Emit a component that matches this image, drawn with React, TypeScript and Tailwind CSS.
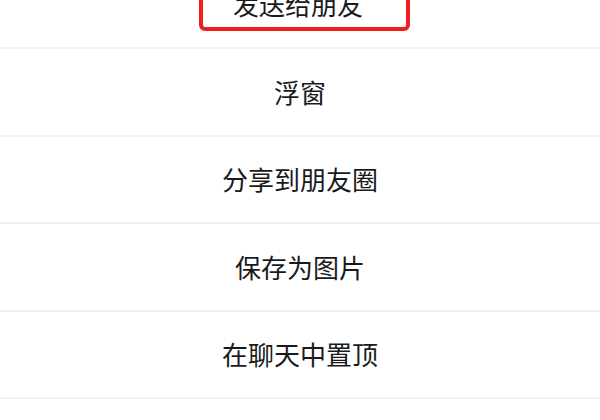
import React from 'react'

const items = ['浮窗', '分享到朋友圈', '保存为图片', '在聊天中置顶', '']

const App: React.FC = () => {
  return (
    <div
      className="w-[600px] h-[420px] overflow-hidden bg-white text-[#1a1a1a]"
      style={{ fontFamily: '"Noto Sans CJK SC", "Noto Sans", sans-serif' }}
    >
      <div className="-mt-[38.5px] flex flex-col">
        <div className="h-[85.5px] flex items-center">
          <div className="ml-[199px] w-[211px] h-[54px] border-[4px] border-[#ef1f1f] rounded-[6px] flex items-center pl-[30px]">
            <span className="text-[26px] leading-none tracking-[0px]">发送给朋友</span>
          </div>
        </div>
        {items.map((label, i) => (
          <div key={i} className="border-t-2 border-[#f1f1f1] h-[87.5px] flex items-center justify-center">
            <span className="text-[26px] leading-none">{label}</span>
          </div>
        ))}
      </div>
    </div>
  )
}

export default App
